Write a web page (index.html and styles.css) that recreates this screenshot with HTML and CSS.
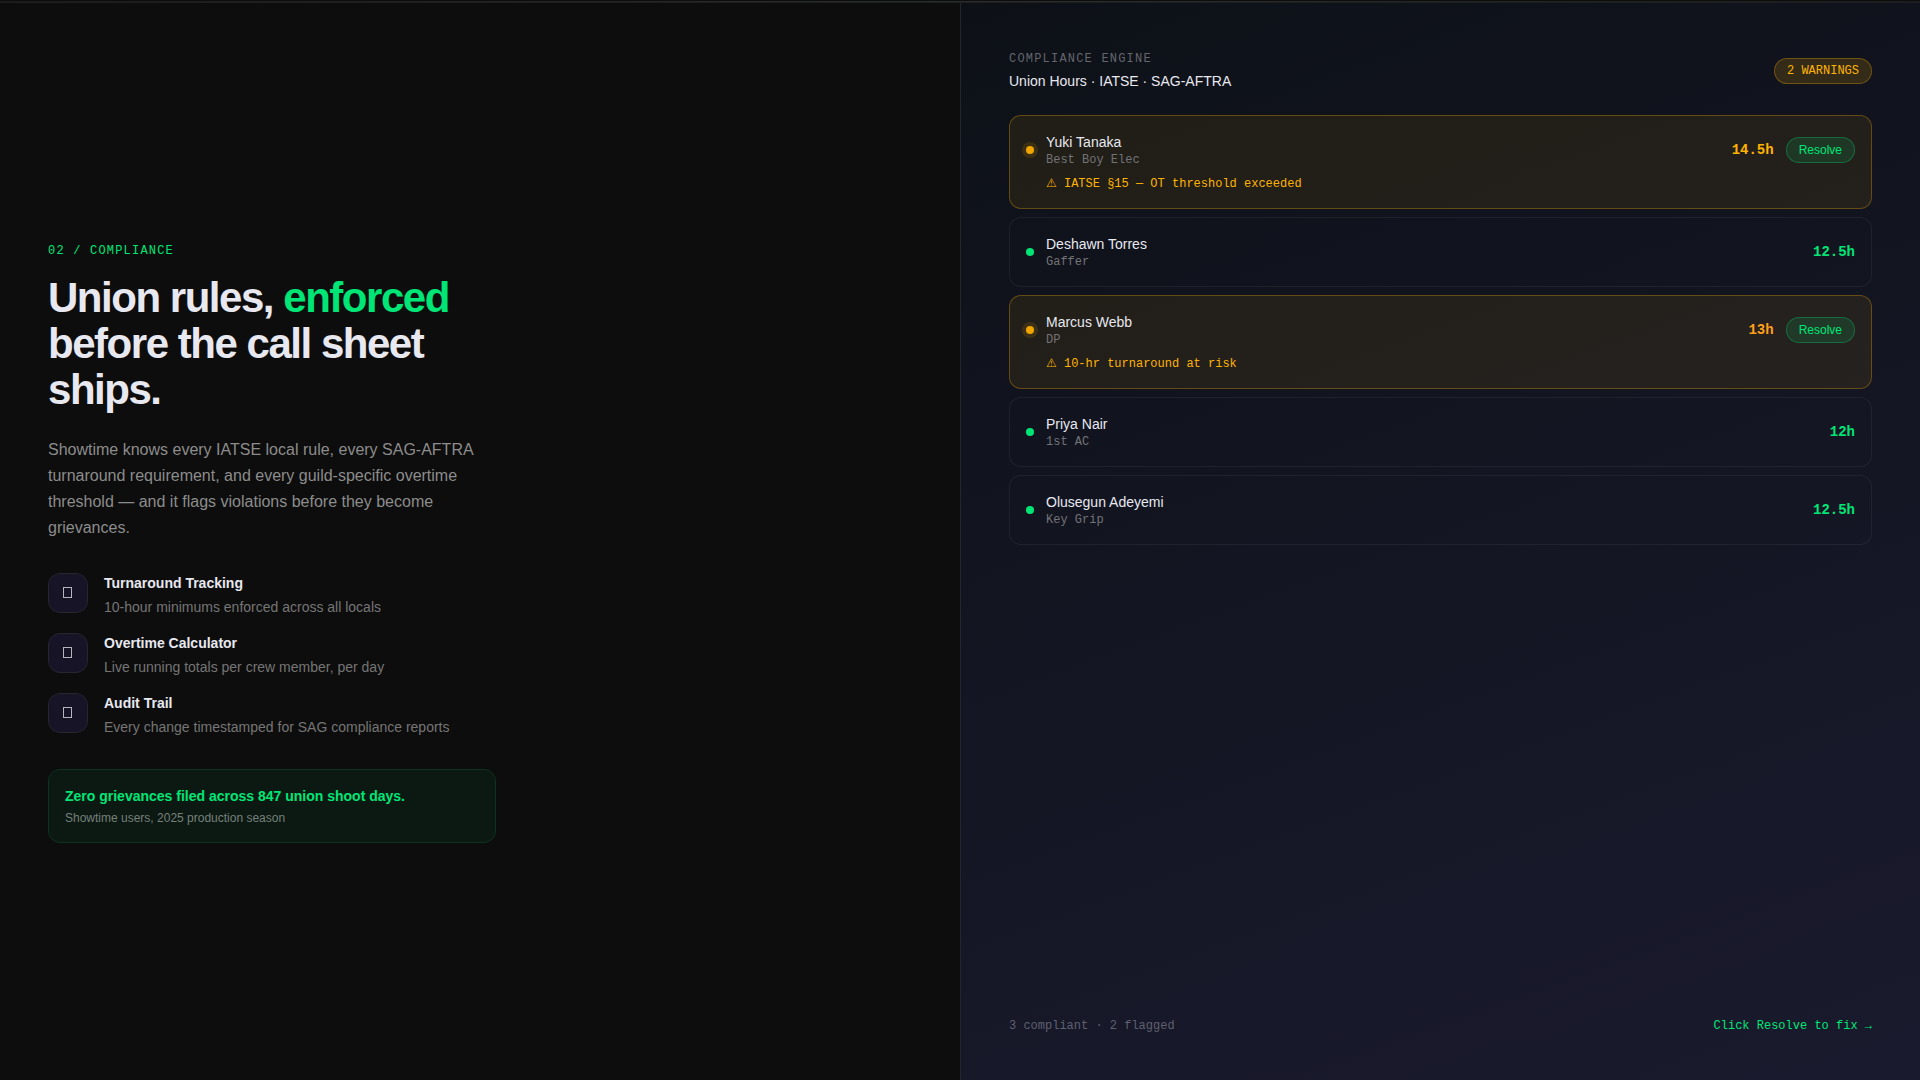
FILE: index.html
```html
<!doctype html>

<html lang="en">
	<head>
		<meta charset="utf-8">
		<meta name="viewport" content="width=device-width, initial-scale=1">
		<title>Showtime - Compliance</title>
		<link rel="stylesheet" href="styles.css">
	</head>

	<body>
		<div class="divider"></div>

		<main class="split">
			<!-- Pitch -->
			<section class="pitch">
				<div class="pitch-inner">
					<p class="eyebrow">02 / COMPLIANCE</p>
					<h1>Union rules, <span class="accent">enforced</span> before the call sheet ships.</h1>
					<p class="lead">Showtime knows every IATSE local rule, every SAG-AFTRA turnaround requirement, and every guild-specific overtime threshold — and it flags violations before they become grievances.</p>

					<ul class="features">
						<li>
							<span class="feature-icon"><svg width="10" height="12" viewBox="0 0 10 12"><rect x=".5" y=".5" width="8" height="10"/></svg></span>
							<div>
								<h3>Turnaround Tracking</h3>
								<p>10-hour minimums enforced across all locals</p>
							</div>
						</li>
						<li>
							<span class="feature-icon"><svg width="10" height="12" viewBox="0 0 10 12"><rect x=".5" y=".5" width="8" height="10"/></svg></span>
							<div>
								<h3>Overtime Calculator</h3>
								<p>Live running totals per crew member, per day</p>
							</div>
						</li>
						<li>
							<span class="feature-icon"><svg width="10" height="12" viewBox="0 0 10 12"><rect x=".5" y=".5" width="8" height="10"/></svg></span>
							<div>
								<h3>Audit Trail</h3>
								<p>Every change timestamped for SAG compliance reports</p>
							</div>
						</li>
					</ul>

					<div class="proof">
						<strong>Zero grievances filed across 847 union shoot days.</strong>
						<p>Showtime users, 2025 production season</p>
					</div>
				</div>
			</section>

			<!-- Live demo panel -->
			<section class="engine">
				<header class="engine-head">
					<div>
						<p class="engine-label">COMPLIANCE ENGINE</p>
						<h2>Union Hours · IATSE · SAG-AFTRA</h2>
					</div>
					<span class="badge">2 WARNINGS</span>
				</header>

				<ul class="crew">
					<li class="member warn">
						<div class="member-row">
							<span class="dot"></span>
							<div class="who">
								<p class="name">Yuki Tanaka</p>
								<p class="role">Best Boy Elec</p>
							</div>
							<span class="hours">14.5h</span>
							<button type="button" class="resolve">Resolve</button>
						</div>
						<p class="alert">⚠ IATSE §15 — OT threshold exceeded</p>
					</li>
					<li class="member">
						<div class="member-row">
							<span class="dot"></span>
							<div class="who">
								<p class="name">Deshawn Torres</p>
								<p class="role">Gaffer</p>
							</div>
							<span class="hours">12.5h</span>
						</div>
					</li>
					<li class="member warn">
						<div class="member-row">
							<span class="dot"></span>
							<div class="who">
								<p class="name">Marcus Webb</p>
								<p class="role">DP</p>
							</div>
							<span class="hours risk">13h</span>
							<button type="button" class="resolve">Resolve</button>
						</div>
						<p class="alert">⚠ 10-hr turnaround at risk</p>
					</li>
					<li class="member">
						<div class="member-row">
							<span class="dot"></span>
							<div class="who">
								<p class="name">Priya Nair</p>
								<p class="role">1st AC</p>
							</div>
							<span class="hours">12h</span>
						</div>
					</li>
					<li class="member">
						<div class="member-row">
							<span class="dot"></span>
							<div class="who">
								<p class="name">Olusegun Adeyemi</p>
								<p class="role">Key Grip</p>
							</div>
							<span class="hours">12.5h</span>
						</div>
					</li>
				</ul>

				<footer class="engine-foot">
					<span>3 compliant · 2 flagged</span>
					<span class="hint">Click Resolve to fix →</span>
				</footer>
			</section>
		</main>
	</body>
</html>
```

FILE: styles.css
```css
:root {
	--green: #00e676;
	--amber: #ffb300;
	--text: #e8e8f0;
	--mono: "Liberation Mono", "DejaVu Sans", monospace;
}

* { box-sizing: border-box; }

body {
	margin: 0;
	background: #0d0d0d;
	color: var(--text);
	font-family: "Liberation Sans", Arial, sans-serif;
	font-size: 14px;
}

h1, h2, h3, p, ul { margin: 0; }

ul {
	padding: 0;
	list-style: none;
}

.divider {
	height: 2px;
	padding-top: 1px;
	background: linear-gradient(90deg, #191919, #2a2e2b, #1a1d1f) content-box;
}

.split {
	display: grid;
	grid-template-columns: 1fr 1fr;
	min-height: 100vh;
	border-top: 1px solid #1e1e1e;
}

/* Left side */

.pitch {
	display: flex;
	align-items: center;
	padding: 48px;
}

.pitch-inner { max-width: 448px; }

.eyebrow {
	margin-bottom: 16px;
	color: var(--green);
	font-family: var(--mono);
	font-size: 12px;
	line-height: 16px;
	letter-spacing: 0.1em;
}

h1 {
	margin-bottom: 24px;
	font-size: 42px;
	line-height: 46px;
	letter-spacing: -0.035em;
}

.accent { color: var(--green); }

.lead {
	margin-bottom: 32px;
	color: #8c8c8c;
	font-size: 16px;
	line-height: 26px;
}

.features {
	display: grid;
	gap: 16px;
	margin-bottom: 32px;
}

.features li {
	display: flex;
	gap: 16px;
}

.features h3 {
	font-size: 14px;
	line-height: 20px;
}

.features p {
	margin-top: 4px;
	color: #757575;
	line-height: 20px;
}

.feature-icon {
	display: flex;
	flex: none;
	align-items: center;
	justify-content: center;
	width: 40px;
	height: 40px;
	background: #161426;
	border: 1px solid #262530;
	border-radius: 12px;
}

.feature-icon svg {
	fill: none;
	stroke: #b4b4bc;
}

.proof {
	padding: 16px;
	background: #0c1812;
	border: 1px solid #0d3321;
	border-radius: 12px;
}

.proof strong {
	display: block;
	color: var(--green);
	line-height: 20px;
}

.proof p {
	margin-top: 4px;
	color: #75807a;
	font-size: 12px;
	line-height: 16px;
}

/* Right side */

.engine {
	display: flex;
	flex-direction: column;
	padding: 48px;
	background: linear-gradient(160deg, #0d1117 0%, #1a1a2e 100%);
	border-left: 1px solid #25252e;
}

.engine-head {
	display: flex;
	align-items: center;
	justify-content: space-between;
	margin-bottom: 24px;
}

.engine-label {
	margin-bottom: 4px;
	color: #64656d;
	font-family: var(--mono);
	font-size: 12px;
	line-height: 16px;
	letter-spacing: 0.1em;
}

h2 {
	font-size: 14px;
	font-weight: 400;
	line-height: 20px;
}

.badge {
	padding: 4px 12px;
	background: rgba(255, 179, 0, 0.15);
	border: 1px solid rgba(255, 179, 0, 0.3);
	border-radius: 99px;
	color: var(--amber);
	font-family: var(--mono);
	font-size: 12px;
	line-height: 16px;
}

.crew {
	display: grid;
	gap: 8px;
}

.member {
	padding: 16px;
	background: rgba(255, 255, 255, 0.005);
	border: 1px solid rgba(255, 255, 255, 0.06);
	border-radius: 12px;
}

.member-row {
	display: flex;
	align-items: center;
	gap: 12px;
}

.who { flex: 1; }

.name { line-height: 20px; }

.role {
	color: #737377;
	font-family: var(--mono);
	font-size: 12px;
	line-height: 16px;
}

.dot {
	width: 8px;
	height: 8px;
	background: var(--green);
	border-radius: 50%;
}

.hours {
	color: var(--green);
	font-family: var(--mono);
	font-weight: 700;
}

.resolve {
	padding: 4px 12px;
	background: rgba(0, 230, 118, 0.12);
	border: 1px solid rgba(0, 230, 118, 0.3);
	border-radius: 99px;
	color: var(--green);
	font-family: inherit;
	font-size: 12px;
	line-height: 16px;
	cursor: pointer;
}

.resolve:hover { background: rgba(0, 230, 118, 0.25); }

.alert {
	margin-top: 8px;
	padding-left: 20px;
	color: var(--amber);
	font-family: var(--mono);
	font-size: 12px;
	line-height: 16px;
}

.warn {
	background: rgba(255, 179, 0, 0.08);
	border-color: rgba(255, 179, 0, 0.3);
}

.warn .dot {
	background: #f0a500;
	box-shadow: 0 0 0 4px rgba(255, 179, 0, 0.12);
}

.warn .hours { color: var(--amber); }

.warn .risk { color: #ff9f1a; }

.engine-foot {
	display: flex;
	justify-content: space-between;
	margin-top: auto;
	color: #5f6070;
	font-family: var(--mono);
	font-size: 12px;
	line-height: 16px;
}

.hint { color: var(--green); }
```
